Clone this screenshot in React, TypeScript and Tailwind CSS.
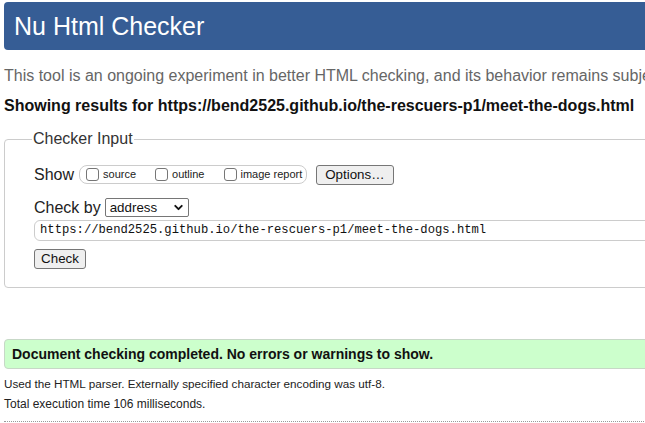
import { ChevronDown } from 'lucide-react'

const sans = { fontFamily: '"Liberation Sans", Arial, sans-serif' }

export default function App() {
  return (
    <div className="w-[645px] h-[423px] overflow-hidden bg-white" style={sans}>
      <div className="w-[760px] pl-1">
        {/* Header */}
        <div className="mt-[2px] h-[48px] bg-[#365d95] rounded-[4px] flex items-center pl-[10px]">
          <h1 className="text-[25px] text-white leading-none">Nu Html Checker</h1>
        </div>

        <p className="mt-[16px] text-[16px] leading-[20px] text-[#666] whitespace-nowrap">
          This tool is an ongoing experiment in better HTML checking, and its behavior remains subject to change
        </p>
        <p className="mt-[10px] text-[16px] leading-[20px] font-bold text-[#111] whitespace-nowrap">
          Showing results for https://bend2525.github.io/the-rescuers-p1/meet-the-dogs.html
        </p>

        {/* Checker Input */}
        <fieldset className="mt-[14px] border border-[#cccccc] rounded-[4px] px-0 pb-[17px]">
          <legend className="ml-[27px] px-[1px] text-[16px] text-[#333] leading-[18px]">Checker Input</legend>

          <div className="pl-[29px]">
            <div className="mt-[16px] h-[21px] flex items-center">
              <span className="text-[16px] text-[#222] mr-[5px]">Show</span>
              <div className="flex items-center h-[19px] border border-[#ccc] rounded-[8px] pl-[6px] pr-[4px] text-[11px] text-[#222]">
                <Box />
                <span className="ml-[4px] mr-[19px]">source</span>
                <Box />
                <span className="ml-[4px] mr-[20px]">outline</span>
                <Box />
                <span className="ml-[3px]">image report</span>
              </div>
              <button className="ml-[9px] h-[20px] px-[8px] bg-[#efefef] border border-[#767676] rounded-[3px] text-[13.33px] text-[#111] leading-none">
                Options…
              </button>
            </div>

            <div className="mt-[13px] h-[19px] flex items-center">
              <span className="text-[16px] text-[#222] leading-none">Check by</span>
              <div className="ml-[4px] w-[84px] h-[19px] border border-[#767676] rounded-[2px] flex items-center justify-between pl-[4px] pr-[3px] text-[13.33px] text-[#111]">
                <span>address</span>
                <ChevronDown className="w-[13px] h-[13px]" strokeWidth={3.5} />
              </div>
            </div>

            <div className="mt-[3px] h-[21px] border border-[#ccc] rounded-[6px] flex items-center pl-[5px] text-[12.2px] text-[#111]" style={{ fontFamily: '"Liberation Mono", monospace' }}>
              https://bend2525.github.io/the-rescuers-p1/meet-the-dogs.html
            </div>

            <button className="mt-[8px] h-[20px] w-[52px] bg-[#efefef] border border-[#767676] rounded-[3px] text-[13.33px] text-[#111] leading-none">
              Check
            </button>
          </div>
        </fieldset>

        {/* Result */}
        <div className="mt-[51px] h-[30px] bg-[#ccffcc] border border-[#c7d8c7] rounded-[4px] flex items-center pl-[7px]">
          <span className="text-[14px] font-bold text-[#111]">Document checking completed. No errors or warnings to show.</span>
        </div>

        <p className="mt-[8px] text-[11.7px] leading-[14px] text-[#222]">
          Used the HTML parser. Externally specified character encoding was utf-8.
        </p>
        <p className="mt-[6px] text-[12px] leading-[14px] text-[#222]">
          Total execution time 106 milliseconds.
        </p>
        <div className="mt-[10px] border-t border-dotted border-[#999]" />
      </div>
    </div>
  )
}

function Box() {
  return <span className="inline-block w-[13px] h-[13px] border border-[#767676] rounded-[3px] bg-white" />
}
